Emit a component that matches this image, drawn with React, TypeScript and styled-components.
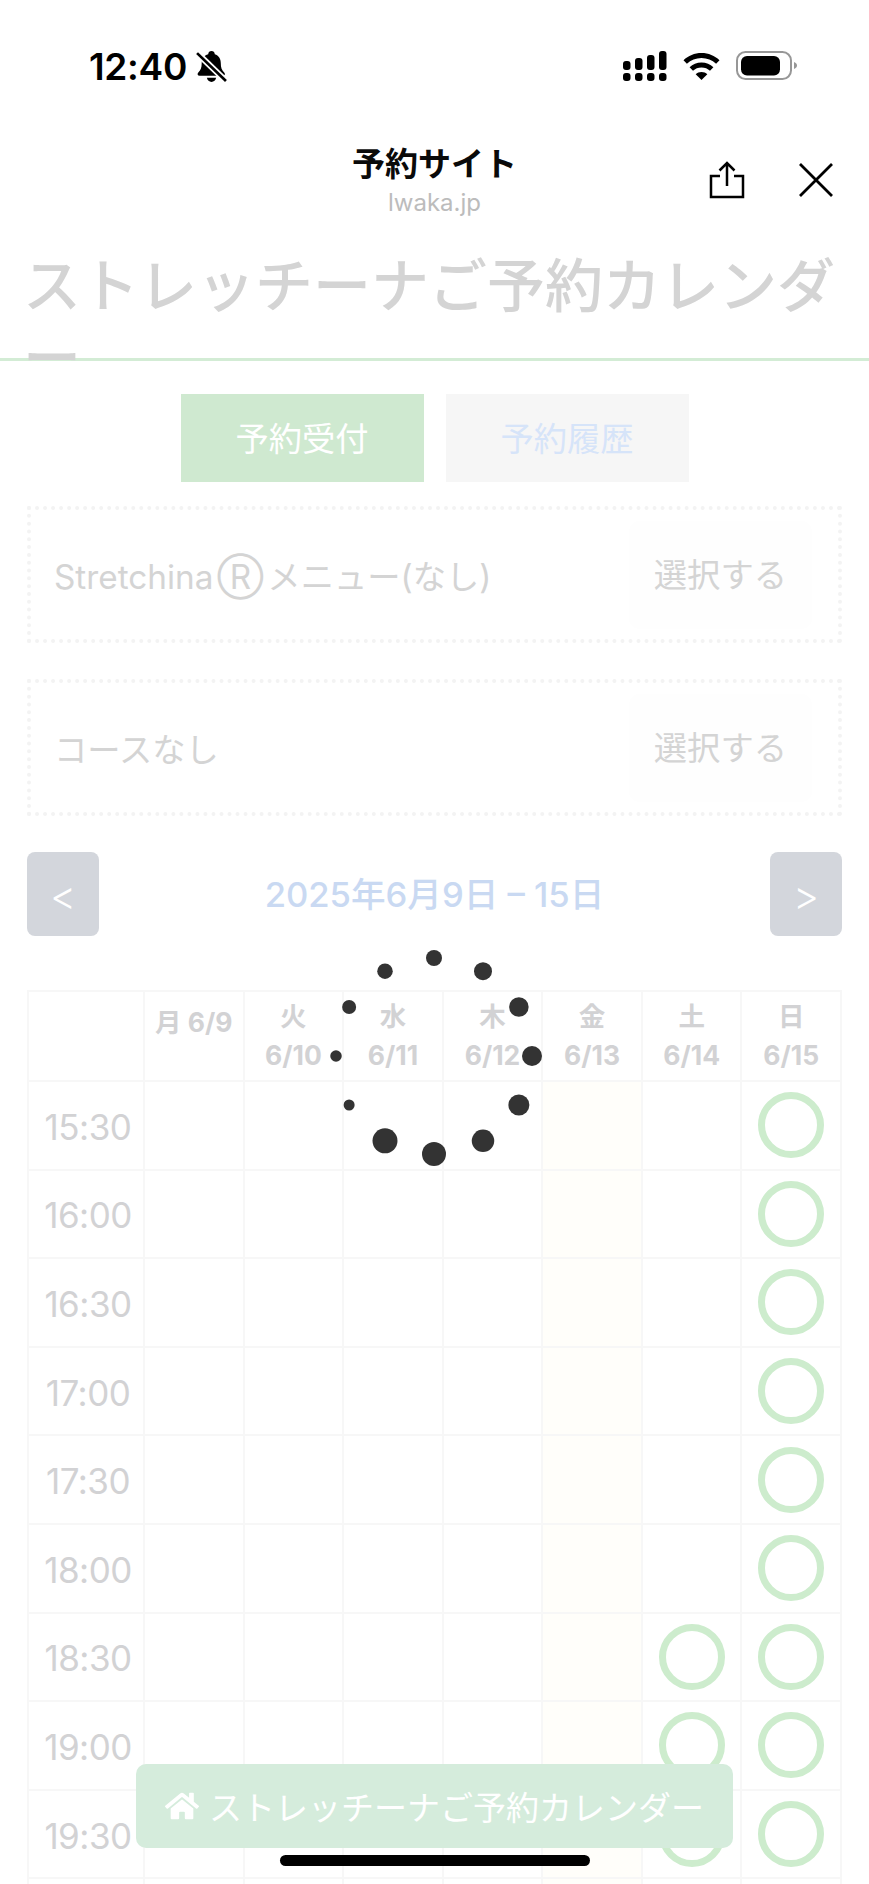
import React from 'react';
import styled, { createGlobalStyle } from 'styled-components';
import { FaHome } from 'react-icons/fa';

const FONT = `Inter, "Noto Sans CJK JP", sans-serif`;
const GRID_LINE = '#f7f7f7';

const days = [
  { week: '火', date: '6/10' },
  { week: '水', date: '6/11' },
  { week: '木', date: '6/12' },
  { week: '金', date: '6/13' },
  { week: '土', date: '6/14' },
  { week: '日', date: '6/15' },
];

const slots = [
  { time: '15:30', open: [6] },
  { time: '16:00', open: [6] },
  { time: '16:30', open: [6] },
  { time: '17:00', open: [6] },
  { time: '17:30', open: [6] },
  { time: '18:00', open: [6] },
  { time: '18:30', open: [5, 6] },
  { time: '19:00', open: [5, 6] },
  { time: '19:30', open: [5, 6] },
  { time: '', open: [] as number[] },
];

const spinnerDots = [16, 18, 19.5, 20, 21, 22.5, 24, 25, 11, 11.5, 14, 15.5];

const App = () => {
  return (
    <Page>
      <GlobalStyle />
      <StatusBar>
        <Clock>
          12:40
          <svg width="31" height="33" viewBox="0 0 30 32">
            <path d="M15 1c1.8 0 3 1.2 3.2 3 3.800 1.200 5.800 4.500 5.800 8.500 0 4.500 1 7 3.500 9.500 1 1 .5 3-1.500 3H3.500c-2 0-2.500-2-1.500-3 2.500-2.500 3.500-5 3.500-9.500 0-4 2.200-7.300 6.300-8.500C12 2.200 13.200 1 15 1z" />
            <path d="M10.500 27h9c-.5 2.500-2.300 4-4.500 4s-4-1.500-4.500-4z" />
            <path d="M1 3l28 27" stroke="#fff" strokeWidth="6" />
            <path d="M1 3l28 27" stroke="#000" strokeWidth="2.600" />
          </svg>
        </Clock>
        <StatusIcons>
          <svg width="44" height="30" viewBox="0 0 44 30">
            <rect x="0" y="10" width="7.500" height="9" rx="3" />
            <rect x="12" y="7" width="7.500" height="12" rx="3" />
            <rect x="24" y="4" width="7.500" height="15" rx="3" />
            <rect x="36" y="0" width="7.500" height="19" rx="3" />
            <rect x="0" y="22" width="7.500" height="8" rx="3" />
            <rect x="12" y="22" width="7.500" height="8" rx="3" />
            <rect x="24" y="22" width="7.500" height="8" rx="3" />
            <rect x="36" y="22" width="7.500" height="8" rx="3" />
          </svg>
          <svg width="37" height="27" viewBox="0 0 37 27">
            <path d="M18.500 0C11.500 0 5.300 2.700.5 7.200l3.400 3.600C7.800 7.100 12.900 5 18.500 5s10.700 2.100 14.600 5.800l3.400-3.600C31.700 2.700 25.500 0 18.500 0z" />
            <path d="M18.500 9.500c-4.600 0-8.800 1.800-11.900 4.700l3.400 3.600c2.200-2.100 5.200-3.300 8.500-3.300s6.300 1.200 8.500 3.300l3.400-3.600c-3.100-2.900-7.300-4.700-11.900-4.700z" />
            <path d="M18.500 19c-2.300 0-4.300.8-5.800 2.200l5.800 5.800 5.800-5.800c-1.500-1.400-3.500-2.200-5.800-2.200z" />
          </svg>
          <svg width="62" height="30" viewBox="0 0 62 30">
            <rect x="1" y="1" width="54" height="27" rx="8.500" fill="none" stroke="#979797" strokeWidth="2" />
            <rect x="5" y="5" width="39" height="19.500" rx="6" />
            <path d="M58 11c2 .8 3 2 3 3.500s-1 2.700-3 3.500z" fill="#979797" />
          </svg>
        </StatusIcons>
      </StatusBar>

      <SheetHeader>
        <SheetTitle>
          <SiteName>予約サイト</SiteName>
          <SiteHost>lwaka.jp</SiteHost>
        </SheetTitle>
        <SheetActions>
          <svg width="36" height="38" viewBox="0 0 36 38" fill="none" stroke="#000" strokeWidth="2.500">
            <path d="M18 25V2M10.500 9.500L18 2l7.500 7.500" />
            <path d="M11 15H2v21h32V15h-9" />
          </svg>
          <svg width="36" height="36" viewBox="0 0 36 36" fill="none" stroke="#000" strokeWidth="2.800">
            <path d="M2 2l32 32M34 2L2 34" />
          </svg>
        </SheetActions>
      </SheetHeader>

      <Content>
        <PageTitle>
          ストレッチーナご予約カレンダ
          <br />ー
        </PageTitle>

        <Tabs>
          <Tab $active>予約受付</Tab>
          <Tab>予約履歴</Tab>
        </Tabs>

        <SelectBox>
          <SelectLabel>Stretchina Ⓡ メニュー(なし)</SelectLabel>
          <SelectButton>選択する</SelectButton>
        </SelectBox>
        <SelectBox>
          <SelectLabel>コースなし</SelectLabel>
          <SelectButton>選択する</SelectButton>
        </SelectBox>

        <WeekNav>
          <NavButton>&lt;</NavButton>
          <WeekLabel>2025年6月9日 – 15日</WeekLabel>
          <NavButton>&gt;</NavButton>
        </WeekNav>

        <Calendar>
          <HeadCell />
          <HeadCell $single>月 6/9</HeadCell>
          {days.map((d) => (
            <HeadCell key={d.date}>
              <span>{d.week}</span>
              <span>{d.date}</span>
            </HeadCell>
          ))}
          {slots.map((slot, row) => (
            <React.Fragment key={row}>
              <TimeCell>{slot.time}</TimeCell>
              {[0, 1, 2, 3, 4, 5, 6].map((col) => (
                <SlotCell key={col} $today={col === 4}>
                  {slot.open.includes(col) && <OpenMark />}
                </SlotCell>
              ))}
            </React.Fragment>
          ))}
        </Calendar>
      </Content>

      <Spinner width="240" height="240" viewBox="-120 -120 240 240">
        {spinnerDots.map((size, i) => {
          const angle = (i * Math.PI) / 6;
          return <circle key={i} cx={98 * Math.sin(angle)} cy={-98 * Math.cos(angle)} r={size / 2} />;
        })}
      </Spinner>

      <HomeButton>
        <FaHome size={34} />
        ストレッチーナご予約カレンダー
      </HomeButton>
      <HomeIndicator />
    </Page>
  );
};

export default App;

const GlobalStyle = createGlobalStyle`
  html, body {
    margin: 0;
    padding: 0;
    background: #fff;
  }
  * {
    box-sizing: border-box;
  }
`;

const Page = styled.div`
  position: relative;
  width: 869px;
  height: 1884px;
  overflow: hidden;
  background: #fff;
  font-family: ${FONT};
`;

const StatusBar = styled.div`
  height: 110px;
  padding: 47px 71px 0 89px;
  display: flex;
  justify-content: space-between;
  align-items: flex-start;
`;

const Clock = styled.div`
  display: flex;
  align-items: center;
  gap: 9px;
  height: 38px;
  font-size: 37px;
  font-weight: 600;
  letter-spacing: -0.3px;
  color: #000;
`;

const StatusIcons = styled.div`
  display: flex;
  align-items: center;
  gap: 16px;
  height: 38px;
`;

const SheetHeader = styled.div`
  position: relative;
  height: 140px;
  display: flex;
  justify-content: center;
`;

const SheetTitle = styled.div`
  padding-top: 34px;
  display: flex;
  flex-direction: column;
  align-items: center;
`;

const SiteName = styled.div`
  font-size: 33px;
  line-height: 40px;
  font-weight: 600;
  color: #0a0a0a;
`;

const SiteHost = styled.div`
  font-size: 24px;
  line-height: 38px;
  color: #bcbcbc;
`;

const SheetActions = styled.div`
  position: absolute;
  top: 51px;
  right: 35px;
  display: flex;
  align-items: center;
  gap: 53px;
`;

const Content = styled.div`
  padding: 0 27px;
`;

const PageTitle = styled.h1`
  margin: 0 -27px;
  height: 111px;
  padding: 0 0 0 23px;
  border-bottom: 3px solid #d3ecd5;
  font-size: 58px;
  line-height: 72px;
  font-weight: 500;
  color: #d4d4d4;
  white-space: nowrap;
`;

const Tabs = styled.div`
  margin-top: 33px;
  display: flex;
  justify-content: center;
  gap: 22px;
`;

const Tab = styled.div<{ $active?: boolean }>`
  width: 243px;
  height: 88px;
  padding-bottom: 3px;
  display: flex;
  align-items: center;
  justify-content: center;
  font-size: 33.300px;
  background: ${(p) => (p.$active ? '#cfe9d0' : '#f6f6f6')};
  color: ${(p) => (p.$active ? '#ffffff' : '#d6e4f9')};
`;

const SelectBox = styled.div`
  margin-top: 24px;
  height: 137px;
  padding: 0 26px 0 23px;
  border: 4px dotted #f3f3f3;
  display: flex;
  align-items: center;
  justify-content: space-between;

  & + & {
    margin-top: 36px;
  }
`;

const SelectLabel = styled.div`
  font-size: 33.300px;
  word-spacing: -5.500px;
  color: #d4d4d4;
`;

const SelectButton = styled.div`
  padding: 32px 25px;
  border-radius: 10px;
  font-size: 33.300px;
  line-height: 44px;
  background: #fefefe;
  color: #d4d4d4;
`;

const WeekNav = styled.div`
  margin-top: 36px;
  height: 84px;
  display: flex;
  align-items: center;
  justify-content: space-between;
`;

const NavButton = styled.div`
  width: 72px;
  height: 84px;
  border-radius: 8px;
  display: flex;
  align-items: center;
  justify-content: center;
  padding-top: 3px;
  font-size: 40px;
  font-weight: 300;
  background: #d3d6dc;
  color: #fff;
`;

const WeekLabel = styled.div`
  padding-bottom: 4px;
  font-size: 34.600px;
  font-weight: 500;
  color: #c9d9f2;
`;

const Calendar = styled.div`
  margin-top: 54px;
  display: grid;
  grid-template-columns: 116px repeat(7, 1fr);
  grid-template-rows: 90px repeat(10, 88.600px);
  border-top: 2px solid ${GRID_LINE};
  border-left: 2px solid ${GRID_LINE};
`;

const HeadCell = styled.div<{ $single?: boolean }>`
  border-right: 2px solid ${GRID_LINE};
  border-bottom: 2px solid ${GRID_LINE};
  padding-bottom: ${(p) => (p.$single ? '28px' : '0')};
  display: flex;
  flex-direction: column;
  align-items: center;
  justify-content: center;
  font-size: 26.500px;
  line-height: 39px;
  font-weight: 700;
  color: #d2d2d4;
  white-space: nowrap;
`;

const TimeCell = styled.div`
  border-right: 2px solid ${GRID_LINE};
  border-bottom: 2px solid ${GRID_LINE};
  display: flex;
  align-items: center;
  justify-content: center;
  padding: 3px 0 0 4px;
  font-size: 35px;
  letter-spacing: -0.5px;
  color: #d2d2d4;
`;

const SlotCell = styled.div<{ $today?: boolean }>`
  border-right: 2px solid ${GRID_LINE};
  border-bottom: 2px solid ${GRID_LINE};
  display: flex;
  align-items: center;
  justify-content: center;
  background: ${(p) => (p.$today ? '#fffefa' : 'transparent')};
`;

const OpenMark = styled.div`
  width: 66px;
  height: 66px;
  border: 7px solid #cdeccd;
  border-radius: 50%;
`;

const Spinner = styled.svg`
  position: absolute;
  left: 314px;
  top: 936px;
  fill: #333;
`;

const HomeButton = styled.div`
  position: absolute;
  left: 136px;
  top: 1764px;
  width: 597px;
  height: 84px;
  border-radius: 10px;
  display: flex;
  align-items: center;
  justify-content: center;
  gap: 10px;
  font-size: 33px;
  background: #d5ecdc;
  color: #fff;
  white-space: nowrap;
`;

const HomeIndicator = styled.div`
  position: absolute;
  left: 280px;
  top: 1855px;
  width: 310px;
  height: 11px;
  border-radius: 6px;
  background: #000;
`;
